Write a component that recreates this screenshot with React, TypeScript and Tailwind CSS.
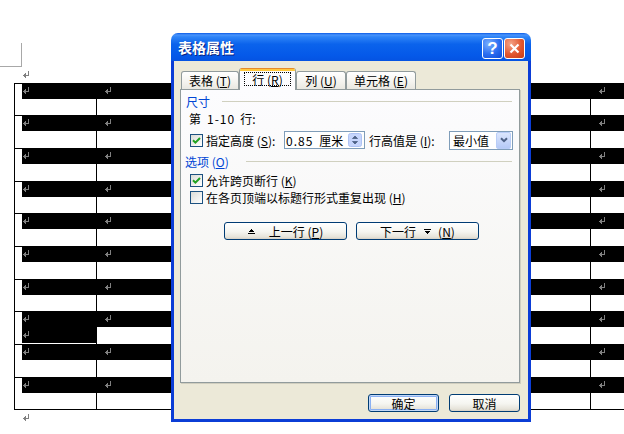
import React from "react";

function Ret() {
  return (
    <svg width="8" height="8" viewBox="0 0 8 8" shapeRendering="crispEdges" className="block">
      <rect x="6" y="0" width="1" height="5" fill="#808080" />
      <rect x="1" y="4" width="6" height="1" fill="#808080" />
      <rect x="2" y="3" width="1" height="3" fill="#808080" />
      <rect x="3" y="2" width="1" height="5" fill="#808080" />
    </svg>
  );
}

function Check({ on }: { on: boolean }) {
  return (
    <div className="w-[13px] h-[13px] shrink-0 border border-[#1c5180] bg-[linear-gradient(135deg,#dcdcd7,#ffffff)] flex items-center justify-center">
      {on && (
        <svg width="9" height="9" viewBox="0 0 9 9">
          <path d="M1 4.2 L3.4 6.6 L8 2" stroke="#21a121" strokeWidth="2" fill="none" />
        </svg>
      )}
    </div>
  );
}

function UpIcon() {
  return (
    <svg width="7" height="7" viewBox="0 0 7 7" shapeRendering="crispEdges" className="block">
      <path d="M3.5 0.5 L6.5 4 L0.5 4 Z" fill="#000" />
      <rect x="0" y="5" width="7" height="1" fill="#000" />
    </svg>
  );
}

function DownIcon() {
  return (
    <svg width="7" height="7" viewBox="0 0 7 7" shapeRendering="crispEdges" className="block">
      <rect x="0" y="1" width="7" height="1" fill="#000" />
      <path d="M0.5 3 L6.5 3 L3.5 6.5 Z" fill="#000" />
    </svg>
  );
}

const rowHeights = [
  "h-[32px]",
  "h-[33px]",
  "h-[33px]",
  "h-[32px]",
  "h-[33px]",
  "h-[33px]",
  "h-[32px]",
  "h-[33px]",
  "h-[33px]",
  "h-[32px]",
];

function TableRow({ r }: { r: number }) {
  return (
    <div className={`grid grid-cols-[repeat(8,82.28px)] ${rowHeights[r]}`}>
      {Array.from({ length: 8 }).map((_, c) =>
        c === 0 ? (
          <div key={c} className="border-l border-t border-black">
            <div className="ml-[7px]">
              <div className="h-[15px] bg-black pt-[3px]">
                <Ret />
              </div>
              {r === 7 && (
                <div className="h-[16px] bg-black pt-[4px]">
                  <Ret />
                </div>
              )}
            </div>
          </div>
        ) : (
          <div key={c} className="border-l border-t border-black">
            <div className="h-[15px] bg-black pl-[7px] pt-[3px]">
              <Ret />
            </div>
          </div>
        )
      )}
    </div>
  );
}

const btn =
  "h-[18px] border border-[#003c74] rounded-[3px] bg-[linear-gradient(to_bottom,#ffffff,#f5f5f0_55%,#e6e3d9_88%,#d6d0c5)] flex items-center justify-center";

export default function App() {
  return (
    <div className="relative w-[624px] h-[434px] overflow-hidden bg-white text-black font-['Noto_Sans_CJK_SC','Noto_Sans',sans-serif]">
      {/* document */}
      <div className="pt-[43px]">
        <div className="w-[22px] h-[24px] border-r border-b border-[#a8a8a8]" />
        <div className="h-[16px] pl-[22px] pt-[4px]">
          <Ret />
        </div>
        <div className="ml-[14px] w-max border-b border-black">
          {rowHeights.map((_, r) => (
            <TableRow key={r} r={r} />
          ))}
        </div>
        <div className="pl-[22px] pt-[4px]">
          <Ret />
        </div>
      </div>

      {/* dialog */}
      <div className="absolute left-[171px] top-[33px] w-[360px] h-[389px] flex flex-col">
        <div className="h-[28px] shrink-0 rounded-t-[7px] bg-[linear-gradient(to_bottom,#0a5ae6_0%,#4a94fb_7%,#2e84f7_14%,#0b63ec_40%,#0559e9_80%,#0553e2_100%)] flex items-start pl-[7px] pr-[6px]">
          <span className="mt-[6px] text-[14px] leading-[16px] font-bold text-white [text-shadow:1px_1px_0_#0a237f]">
            表格属性
          </span>
          <div className="ml-auto mt-[5px] flex gap-[1px]">
            <div className="w-[21px] h-[21px] rounded-[3px] border border-white bg-[radial-gradient(circle_at_30%_25%,#79b0ff,#2a6cf0_55%,#0e4ad6)] flex items-center justify-center text-white font-bold text-[17px] leading-none font-['Liberation_Sans',sans-serif]">
              ?
            </div>
            <div className="w-[21px] h-[21px] rounded-[3px] border border-white bg-[radial-gradient(circle_at_30%_25%,#f4a488,#e2572f_55%,#c53b18)] flex items-center justify-center">
              <svg width="11" height="11" viewBox="0 0 11 11">
                <path d="M1.5 1.5 L9.5 9.5 M9.5 1.5 L1.5 9.5" stroke="#fff" strokeWidth="2.2" />
              </svg>
            </div>
          </div>
        </div>

        <div className="flex-1 bg-[#ece9d8] border-x-[3px] border-b-[3px] border-[#0b3dd6] pl-[6px] pr-[8px] pt-[7px] flex flex-col text-[12px] leading-[15px]">
          {/* tabs */}
          <div className="h-[21px] shrink-0 flex items-end pl-[1px] relative z-10">
            <div className="w-[58px] h-[18px] border-x border-t border-[#919b9c] rounded-t-[3px] bg-[linear-gradient(to_bottom,#ffffff,#f4f3ee_60%,#e9e8e1)] flex items-center justify-center">
              表格 (<u>T</u>)
            </div>
            <div className="w-[57px] h-[22px] -mb-[1px] border-x border-[#919b9c] rounded-t-[3px] bg-[#fcfcfe] flex flex-col items-center overflow-hidden">
              <div className="w-full h-[3px] shrink-0 bg-[#ffc83c] border-t border-[#e68b2c]" />
              <div className="mt-[1px] w-[47px] h-[14px] border border-dotted border-black flex items-center justify-center">
                行 (<u>R</u>)
              </div>
            </div>
            <div className="w-[50px] h-[18px] border-x border-t border-[#919b9c] rounded-t-[3px] bg-[linear-gradient(to_bottom,#ffffff,#f4f3ee_60%,#e9e8e1)] flex items-center justify-center">
              列 (<u>U</u>)
            </div>
            <div className="w-[70px] h-[18px] border-x border-t border-[#919b9c] rounded-t-[3px] bg-[linear-gradient(to_bottom,#ffffff,#f4f3ee_60%,#e9e8e1)] flex items-center justify-center">
              单元格 (<u>E</u>)
            </div>
          </div>

          {/* panel */}
          <div className="h-[294px] shrink-0 border border-[#919b9c] bg-[linear-gradient(to_bottom,#fcfcfe,#f4f3ee)] shadow-[1px_1px_0_#d0cebf] flex flex-col">
            <div className="mt-[4px] h-[15px] flex items-center pl-[5px] pr-[7px]">
              <span className="w-[36px] shrink-0 text-[#0046d5]">尺寸</span>
              <div className="flex-1 h-px bg-[#d0d0bf]" />
            </div>
            <div className="mt-[2px] h-[15px] flex items-center pl-[8px]">
              <span>第</span>
              <span className="ml-[6px] tracking-[1px]">1-10</span>
              <span className="ml-[5px]">行:</span>
            </div>
            <div className="mt-[5px] h-[18px] flex items-center pl-[9px]">
              <Check on />
              <span className="ml-[3px] w-[78px] shrink-0">
                指定高度 (<u>S</u>):
              </span>
              <div className="w-[81px] h-[18px] shrink-0 border border-[#7f9db9] bg-white flex items-center pl-[1px] pr-[2px]">
                <span className="tracking-[1px]">0.85</span>
                <span className="ml-[6px]">厘米</span>
                <div className="ml-auto">
                  <svg width="14" height="14" viewBox="0 0 14 14" className="block">
                    <rect x="0.5" y="0.5" width="13" height="13" rx="2" fill="#c6d5fc" stroke="#aec2f3" />
                    <path d="M4.5 5.5 L7 3 L9.5 5.5 Z" fill="#4d6185" stroke="#4d6185" strokeWidth="0.8" />
                    <path d="M4.5 8.5 L7 11 L9.5 8.5 Z" fill="#4d6185" stroke="#4d6185" strokeWidth="0.8" />
                  </svg>
                </div>
              </div>
              <span className="ml-[4px] w-[80px] shrink-0">
                行高值是 (<u>I</u>):
              </span>
              <div className="w-[64px] h-[19px] shrink-0 border border-[#7f9db9] bg-white flex items-center pl-[3px] pr-px">
                <span>最小值</span>
                <div className="ml-auto w-[15px] h-[17px] rounded-[2px] border border-[#b9cdf7] bg-[linear-gradient(to_bottom,#dbe6fd,#b6caf7)] flex items-center justify-center">
                  <svg width="8" height="6" viewBox="0 0 8 6" className="block">
                    <path d="M1 1.2 L4 4.2 L7 1.2" stroke="#4d6185" strokeWidth="2" fill="none" />
                  </svg>
                </div>
              </div>
            </div>
            <div className="mt-[5px] h-[15px] flex items-center pl-[4px] pr-[7px]">
              <span className="w-[61px] shrink-0 text-[#0046d5]">
                选项 (<u>O</u>)
              </span>
              <div className="flex-1 h-px bg-[#d0d0bf]" />
            </div>
            <div className="mt-[4px] h-[15px] flex items-center pl-[9px]">
              <Check on />
              <span className="ml-[3px]">
                允许跨页断行 (<u>K</u>)
              </span>
            </div>
            <div className="mt-[2px] h-[15px] flex items-center pl-[9px]">
              <Check on={false} />
              <span className="ml-[3px]">
                在各页顶端以标题行形式重复出现 (<u>H</u>)
              </span>
            </div>
            <div className="mt-[17px] flex pl-[43px] gap-[9px]">
              <div className={`w-[123px] ${btn} gap-[14px]`}>
                <UpIcon />
                <span>
                  上一行 (<u>P</u>)
                </span>
              </div>
              <div className={`w-[123px] ${btn}`}>
                <span>下一行</span>
                <span className="ml-[8px]">
                  <DownIcon />
                </span>
                <span className="ml-[7px]">
                  (<u>N</u>)
                </span>
              </div>
            </div>
          </div>

          {/* bottom buttons */}
          <div className="mt-[11px] flex justify-end gap-[10px]">
            <div className={`w-[71px] ${btn} shadow-[inset_0_0_0_1px_#c2d7f7,inset_0_0_0_2px_#8bb0f2]`}>确定</div>
            <div className={`w-[71px] ${btn}`}>取消</div>
          </div>
        </div>
      </div>
    </div>
  );
}
